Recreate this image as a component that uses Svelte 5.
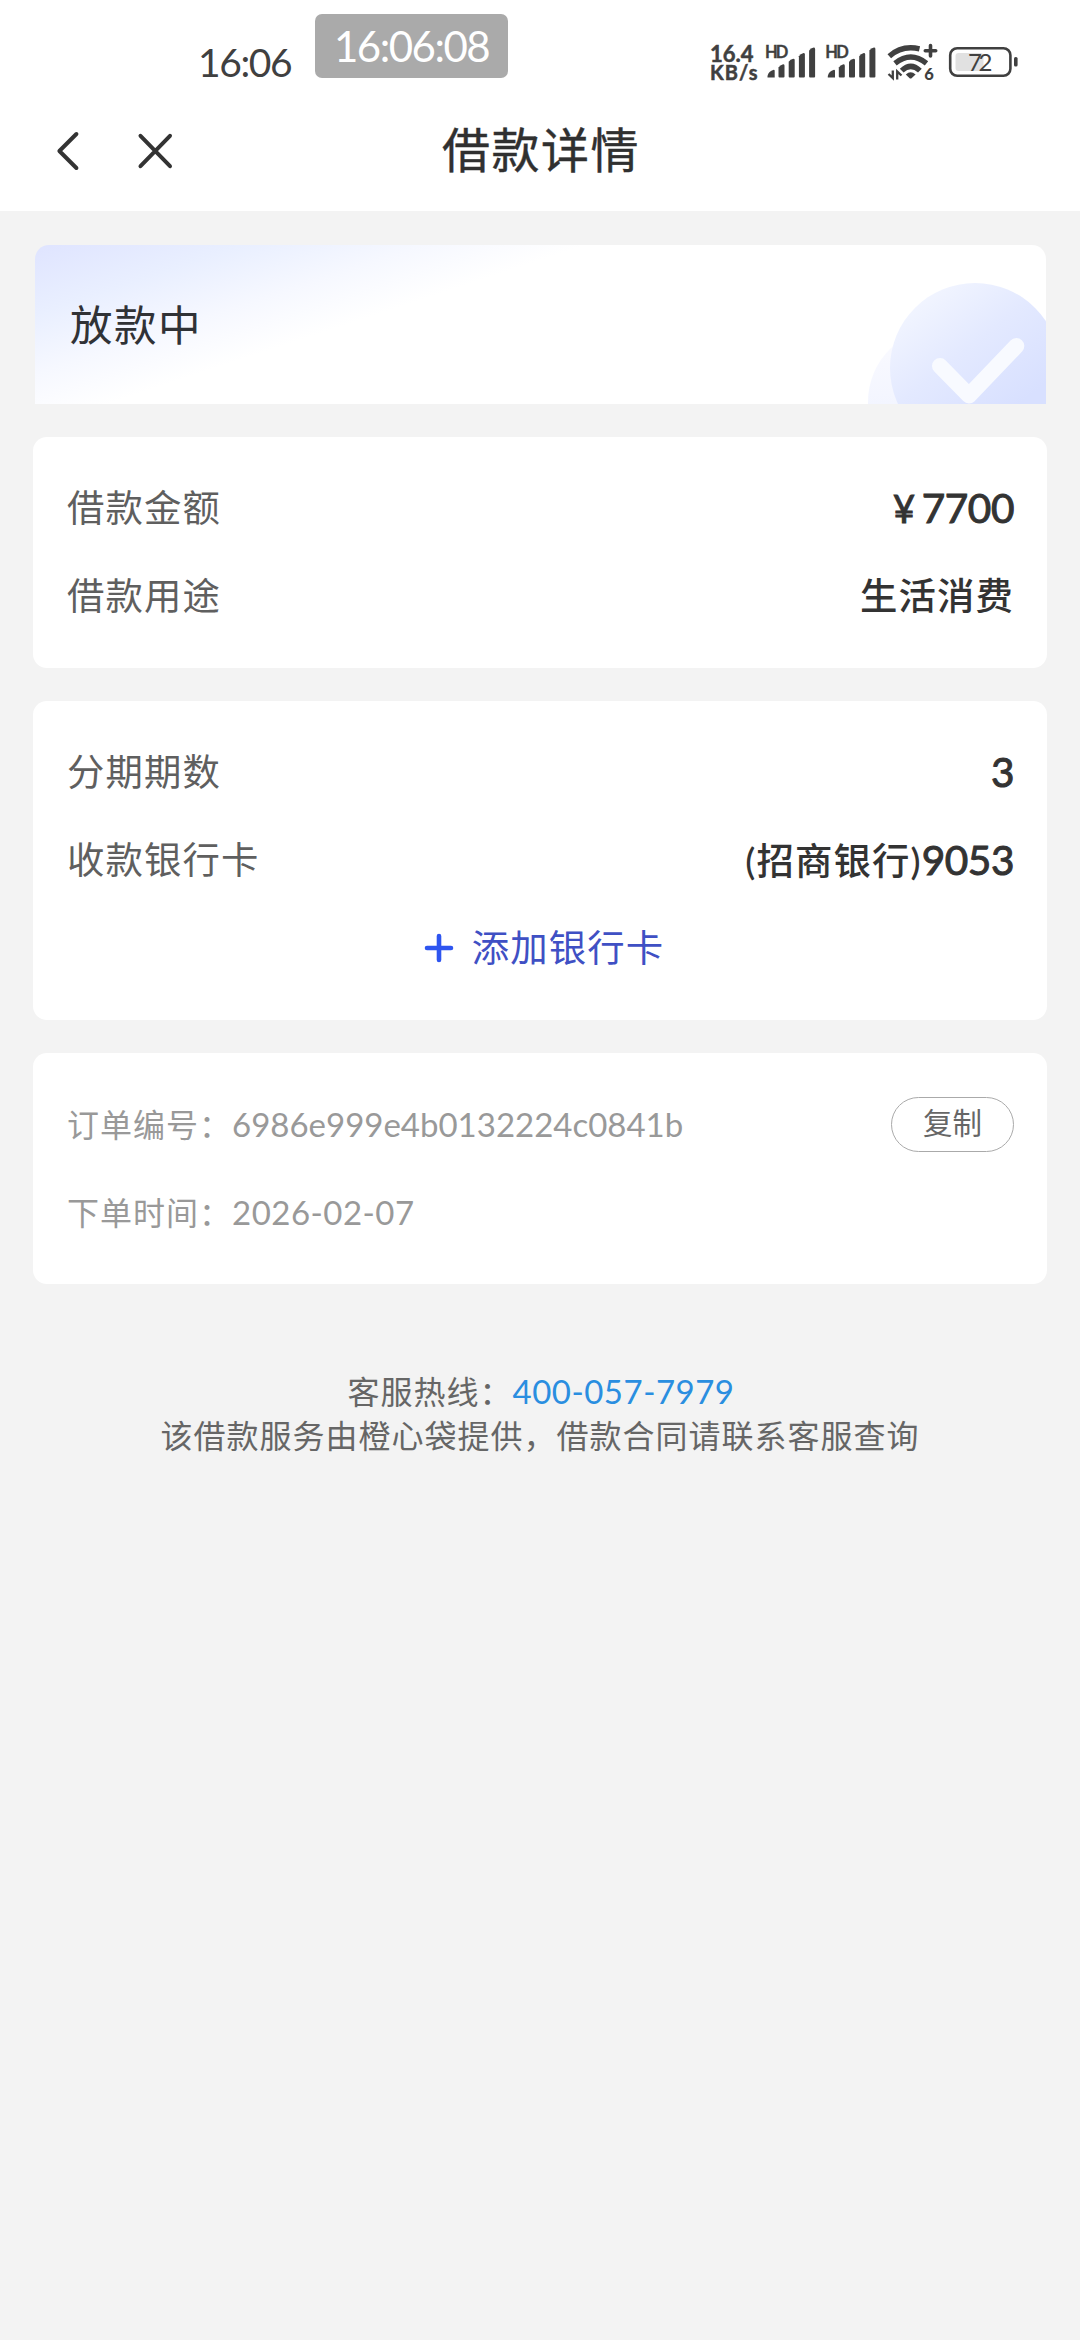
<script>
  const bars = [
    [0, 22.6], [11, 16.8], [21.2, 11.2], [31.4, 5.6], [41.6, 0]
  ];
</script>

{#snippet signal(x)}
  <text x={x - 2.6} y="38" class="hd" textLength="23.5">HD</text>
  {#each bars as [dx, dy], i}
    {#if i === 0}
      <path class="ink" d="M{x} 57.6V56q1-4.6 6.2-6.2 1 0 1 1v6.8z" />
    {:else}
      <path class="ink" d="M{x + dx} {dy + 30.6}q1.6-2.4 4.6-3.1 1.4 0 1.4 1.4V56.6q0 1-1 1h-4q-1 0-1-1z" />
    {/if}
  {/each}
{/snippet}

<div class="screen">
  <header>
    <div class="status">
      <span class="clock">16:06</span>
      <span class="pill">16:06:08</span>
      <svg class="sys" width="320" height="90" viewBox="700 0 320 90" role="img" aria-label="status">
        <g transform="translate(0 20)">
          <text x="710" y="42" class="net" textLength="43.5">16.4</text>
          <text x="710" y="60.2" class="net small" textLength="47.5">KB/s</text>
          {@render signal(767.5)}
          {@render signal(827.8)}
          <g class="arc">
            <path d="M889.300 36.200Q902 24.800 919.500 28.800" />
            <path d="M895 43.300Q910.800 30.800 926.500 43.300" />
            <path d="M901.700 50.600Q910.800 42 919.900 50.600" />
          </g>
          <path class="ink" d="M905.800 54.600Q910.600 49.800 915.600 54.600L911.800 58q-1.200 1-2.400 0z" />
          <path class="plus" d="M930.500 25.600v10.400M925.300 30.800h10.400" />
          <path class="thin" d="M888.500 54l4.300 4V50.500M901.500 55.500l-4.300-4V59.500" />
          <text x="924.300" y="60.2" class="six">6</text>
          <rect x="955.500" y="33" width="28" height="18" rx="3" fill="#e1e1e1" />
          <rect x="950.200" y="28.200" width="60.200" height="27.600" rx="7" fill="none" stroke="#404040" stroke-width="2.600" />
          <rect x="1014" y="37" width="3.600" height="9.500" rx="1.600" fill="#404040" />
          <text x="968" y="51" class="pct" textLength="24.5">72</text>
        </g>
      </svg>
    </div>
    <nav>
      <svg class="back" width="30" height="44" viewBox="0 0 30 44"><path d="M22.400 5L5.400 22 22.400 39" /></svg>
      <svg class="close" width="40" height="44" viewBox="0 0 40 44"><path d="M5.500 6.800L35 37.200M35 6.800L5.500 37.200" /></svg>
      <h1>借款详情</h1>
    </nav>
  </header>

  <main>
    <section class="banner">
      <h2>放款中</h2>
      <svg width="180" height="159" viewBox="866 245 180 159" aria-hidden="true">
        <defs>
          <linearGradient id="disc" x1="0.1" y1="0.1" x2="0.65" y2="0.8">
            <stop offset="0" stop-color="#f3f6ff" />
            <stop offset=".5" stop-color="#e3e9ff" />
            <stop offset="1" stop-color="#d8e0ff" />
          </linearGradient>
          <linearGradient id="halo" x1="0" y1="0" x2="0" y2="1">
            <stop offset="0" stop-color="#fbfbff" />
            <stop offset=".7" stop-color="#f0f3ff" />
          </linearGradient>
        </defs>
        <circle cx="943" cy="402" r="75" fill="url(#halo)" />
        <circle cx="975" cy="368" r="85" fill="url(#disc)" />
        <path d="M940 366L969 395.500 1016.300 346" fill="none" stroke="#f8faff" stroke-width="16" stroke-linecap="round" stroke-linejoin="round" />
      </svg>
    </section>

    <section class="card">
      <div class="row"><span>借款金额</span><strong><b class="yen">¥</b><b>7700</b></strong></div>
      <div class="row"><span>借款用途</span><strong>生活消费</strong></div>
    </section>

    <section class="card">
      <div class="row"><span>分期期数</span><strong><b>3</b></strong></div>
      <div class="row"><span>收款银行卡</span><strong>(招商银行)<b>9053</b></strong></div>
      <div class="add">
        <svg width="30" height="30" viewBox="0 0 30 30"><path d="M15 3v24M3 15h24" /></svg>
        <span>添加银行卡</span>
      </div>
    </section>

    <section class="card order">
      <div class="row">
        <span>订单编号：<i>6986e999e4b0132224c0841b</i></span>
        <button>复制</button>
      </div>
      <div class="row"><span>下单时间：<i class="date">2026-02-07</i></span></div>
    </section>
  </main>

  <footer>
    <p class="hotline">客服热线：<a href="tel:400-057-7979">400-057-7979</a></p>
    <p>该借款服务由橙心袋提供，借款合同请联系客服查询</p>
  </footer>
</div>

<style>
  :global(body) { background: #f3f3f3; }
  .screen {
    width: 1080px;
    height: 2340px;
    overflow: hidden;
    background: #f3f3f3;
    color: #333;
    font-family: Lato, "Noto Sans CJK SC", sans-serif;
    font-variant-ligatures: none;
  }
  header { height: 211px; background: #fff; }
  .status { display: flex; align-items: flex-start; height: 90px; }
  .clock {
    width: 116px; margin-left: 198px; padding-top: 38px;
    font-size: 39px; line-height: 48px; letter-spacing: -1.400px; color: #404040;
  }
  .pill {
    box-sizing: border-box; width: 193px; height: 64px; margin: 14px 0 0 1px;
    padding-left: 19px; border-radius: 7px;
    background: #aaa; color: #fff;
    font-size: 42px; line-height: 65px; letter-spacing: -1.500px;
  }
  .sys { margin-left: 192px; }
  .sys text { font-family: Lato, sans-serif; fill: #404040; font-weight: 700; }
  .sys .net { font-size: 22px; stroke: #404040; stroke-width: .500px; }
  .sys .net.small { font-size: 20px; }
  .sys .hd { font-size: 16.500px; stroke: #404040; stroke-width: .300px; }
  .sys .six { font-size: 16.500px; font-weight: 900; }
  .sys .pct { font-size: 24px; font-weight: 400; }
  .ink { fill: #404040; }
  .arc path { fill: none; stroke: #404040; stroke-width: 5.400; }
  .plus, .thin { fill: none; stroke: #404040; stroke-width: 3.600; stroke-linecap: round; }
  .thin { stroke-width: 2.300; stroke-linecap: butt; }
  nav { display: flex; align-items: center; height: 122px; padding-left: 54px; }
  nav path { fill: none; stroke: #333; stroke-width: 4; stroke-linecap: round; stroke-linejoin: round; }
  .close { margin-left: 51px; }
  h1 {
    margin: 0 0 3px 267px; font-size: 48px; font-weight: 400; line-height: 60px;
    letter-spacing: 1.500px; color: #303030; -webkit-text-stroke: .4px #303030;
  }
  main { display: flex; flex-direction: column; gap: 33px; padding: 34px 33px 0; }
  .banner {
    display: flex; justify-content: space-between; align-items: center;
    height: 159px; margin: 0 1px 0 2px; overflow: hidden;
    border-radius: 14px 14px 0 0;
    background: linear-gradient(161.6deg, #dfe4ff 0, #e9efff 14%, #f6f8ff 26%, #fff 37%);
  }
  h2 {
    margin: 0 0 0 35px; font-size: 42.500px; font-weight: 400; line-height: 60px;
    letter-spacing: 1.500px; color: #303236;
  }
  .card { padding: 27.500px 33px; border-radius: 14px; background: #fff; }
  .row, .add {
    box-sizing: border-box; display: flex; align-items: center; height: 88px; padding-bottom: 1px;
    font-size: 37.400px; line-height: 54px; letter-spacing: 1.100px;
  }
  .row { justify-content: space-between; color: #5f5f5f; }
  .row span { padding-left: 1px; }
  strong { font-weight: 500; color: #333; }
  b { font-weight: 400; font-size: 40.500px; letter-spacing: -.400px; -webkit-text-stroke: 1px #333; }
  .yen { margin-right: 7px; font-size: 38px; }
  .add { justify-content: center; gap: 18px; color: #3f50c4; padding-left: 8px; }
  .add path { fill: none; stroke: #2e55f0; stroke-width: 4.600; stroke-linecap: round; }
  .order .row { font-size: 32px; letter-spacing: 1px; color: #999; }
  i, a { font-style: normal; font-size: 33px; letter-spacing: 0; }
  .date, a { letter-spacing: .500px; }
  button {
    box-sizing: border-box; width: 123px; height: 55px; padding: 0 0 2px;
    border: 1px solid #aaa; border-radius: 28px; background: #fff;
    color: #666; font: inherit; font-size: 29.500px; line-height: 48px;
  }
  footer { margin-top: 86px; text-align: center; font-size: 32px; line-height: 43.500px; letter-spacing: 1px; color: #666; }
  p { margin: 0; }
  .hotline { padding-left: 2px; }
  a { color: #2a8ee0; text-decoration: none; }
</style>
